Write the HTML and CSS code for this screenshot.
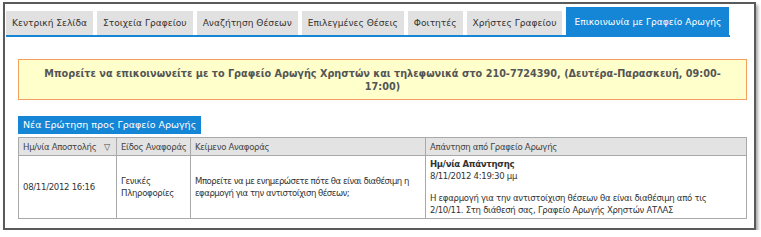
FILE: index.html
```html
<!DOCTYPE html>
<html>
<head>
<meta charset="utf-8">
<link rel="stylesheet" href="styles.css">
</head>
<body>
<div class="frame">
  <div class="tabs">
    <div class="tab">Κεντρική Σελίδα</div>
    <div class="tab">Στοιχεία Γραφείου</div>
    <div class="tab">Αναζήτηση Θέσεων</div>
    <div class="tab">Επιλεγμένες Θέσεις</div>
    <div class="tab">Φοιτητές</div>
    <div class="tab">Χρήστες Γραφείου</div>
    <div class="tab active">Επικοινωνία με Γραφείο Αρωγής</div>
  </div>
  <div class="content">
    <div class="notice">Μπορείτε να επικοινωνείτε με το Γραφείο Αρωγής Χρηστών και τηλεφωνικά στο 210-7724390, (Δευτέρα-Παρασκευή, 09:00-<wbr>17:00)</div>
    <div class="btn">Νέα Ερώτηση προς Γραφείο Αρωγής</div>
    <table class="grid">
      <colgroup>
        <col class="c1"><col class="c2"><col class="c3"><col class="c4">
      </colgroup>
      <thead>
        <tr>
          <th>Ημ/νία Αποστολής <span class="sort">▽</span></th>
          <th>Είδος Αναφοράς</th>
          <th>Κείμενο Αναφοράς</th>
          <th>Απάντηση από Γραφείο Αρωγής</th>
        </tr>
      </thead>
      <tbody>
        <tr>
          <td>08/11/2012 16:16</td>
          <td>Γενικές Πληροφορίες</td>
          <td class="report">Μπορείτε να με ενημερώσετε πότε θα είναι διαθέσιμη η εφαρμογή για την αντιστοίχιση θέσεων;</td>
          <td class="answer"><b>Ημ/νία Απάντησης</b><br>8/11/2012 4:19:30 μμ<div class="reply">Η εφαρμογή για την αντιστοίχιση θέσεων θα είναι διαθέσιμη από τις 2/10/11. Στη διάθεσή σας, Γραφείο Αρωγής Χρηστών ΑΤΛΑΣ</div></td>
        </tr>
      </tbody>
    </table>
  </div>
</div>
</body>
</html>
```
FILE: styles.css
```css
html, body { margin: 0; padding: 0; background: #fff; }
body { font-family: "DejaVu Sans", Verdana, sans-serif; }
.frame {
  margin: 2px 0 0 3px;
  width: 749px;
  height: 224px;
  border: 2px solid #5a5a5a;
  box-shadow: 2px 3px 3px rgba(0,0,0,0.35);
  background: #fff;
}
.tabs {
  display: flex;
  align-items: flex-end;
  gap: 4px;
  margin: 3px 0 0 1px;
  width: 724px;
  border-bottom: 2px solid #1586d6;
}
.tab {
  height: 24px;
  line-height: 24px;
  padding: 0 6px;
  background: #e1e1e1;
  color: #333;
  font-size: 9.1px;
  white-space: nowrap;
}
.tab.active {
  height: 28px;
  line-height: 30px;
  background: #1586d6;
  color: #fff;
  padding: 0 8px;
}
.content { padding: 22px 7px 0 13px; }
.notice {
  background: #ffffcc;
  border: 1px solid #f2a05e;
  color: #555;
  font-weight: bold;
  font-size: 9.7px;
  text-align: center;
  line-height: 13px;
  padding: 7px 8px 6px;
}
.btn {
  display: inline-block;
  margin-top: 16px;
  background: #1586d6;
  color: #fff;
  font-size: 9.5px;
  line-height: 18px;
  padding: 0 5px;
}
.grid {
  width: 100%;
  table-layout: fixed;
  border-collapse: collapse;
  margin-top: 3px;
  font-family: "DejaVu Sans Condensed", "DejaVu Sans", sans-serif;
  font-size: 9.5px;
  letter-spacing: -0.3px;
  color: #333;
}
.c1 { width: 98px; }
.c2 { width: 74px; }
.c3 { width: 235px; }
.grid th {
  background: #e3e3e3;
  border: 1px solid #a9a9a9;
  font-weight: normal;
  text-align: left;
  height: 17px;
  padding: 0 4px;
  color: #444;
  white-space: nowrap;
}
.grid td {
  border: 1px solid #a9a9a9;
  padding: 2px 4px;
  height: 57px;
  line-height: 12.5px;
  vertical-align: middle;
}
.grid td.report { letter-spacing: -0.5px; padding-right: 2px; }
.grid td.answer { vertical-align: top; line-height: 12px; }
.reply { margin-top: 10px; }
.sort { margin-left: 5px; font-size: 9px; }
```
